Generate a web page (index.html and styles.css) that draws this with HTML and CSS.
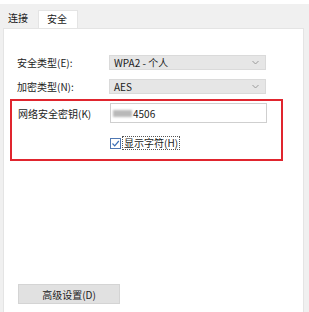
FILE: index.html
```html
<!DOCTYPE html>
<html lang="zh-CN">
<head>
  <meta charset="UTF-8" />
  <title>无线网络属性</title>
  <link rel="stylesheet" href="styles.css">
</head>
<body>
  <div class="top-strip"></div>
  <div class="tabbar">
    <span class="tab">连接</span>
    <span class="tab active">安全</span>
  </div>

  <div class="panel">
    <div class="row">
      <label class="label">安全类型(E):</label>
      <div class="select">
        <span>WPA2 - 个人</span>
        <svg class="arrow" width="7" height="5" viewBox="0 0 7 5"><path d="M0.5 1 L3.5 4 L6.5 1" fill="none" stroke="#9a9a9a" stroke-width="1"/></svg>
      </div>
    </div>
    <div class="row">
      <label class="label">加密类型(N):</label>
      <div class="select">
        <span>AES</span>
        <svg class="arrow" width="7" height="5" viewBox="0 0 7 5"><path d="M0.5 1 L3.5 4 L6.5 1" fill="none" stroke="#9a9a9a" stroke-width="1"/></svg>
      </div>
    </div>

    <div class="highlight">
      <div class="row key-row">
        <label class="label">网络安全密钥(K)</label>
        <div class="input"><span class="mask"></span>4506</div>
      </div>
      <div class="check-row">
        <span class="checkbox">
          <svg width="9" height="9" viewBox="0 0 9 9"><path d="M1.5 4.5 L3.7 6.8 L7.8 2" fill="none" stroke="#3b6fb6" stroke-width="1.2"/></svg>
        </span>
        <span class="check-label">显示字符(H)</span>
      </div>
    </div>

    <div class="spacer"></div>
    <button class="btn">高级设置(D)</button>
  </div>
</body>
</html>
```

FILE: styles.css
```css
* {
  box-sizing: border-box;
  margin: 0;
  padding: 0;
}

body {
  width: 309px;
  height: 312px;
  overflow: hidden;
  background: #f0f0f0;
  font-family: "Noto Sans CJK SC", "Liberation Sans", sans-serif;
  font-size: 10px;
  color: #1a1a1a;
  display: flex;
  flex-direction: column;
}

.top-strip {
  height: 4px;
  background: #fff;
}

.tabbar {
  height: 24px;
  display: flex;
  align-items: flex-end;
  padding-left: 4px;
}

.tab {
  height: 18px;
  line-height: 16px;
  padding: 0 4px;
}

.tab.active {
  background: #fff;
  border: 1px solid #e4e4e4;
  border-bottom: none;
  width: 40px;
  margin-left: 6px;
  padding-left: 8px;
}

.panel {
  flex: 1;
  background: #fff;
  margin: 0 5px 0 3px;
  border: 1px solid #e4e4e4;
  border-bottom: none;
  padding: 26px 0 8px 13px;
  display: flex;
  flex-direction: column;
}

.row {
  display: flex;
  align-items: center;
  height: 15px;
  margin-bottom: 9px;
}

.label {
  width: 92px;
  color: #222;
}

.select {
  width: 157px;
  height: 15px;
  background: #e6e6e6;
  border: 1px solid #dadada;
  display: flex;
  align-items: center;
  justify-content: space-between;
  padding: 0 6px 0 4px;
  font-size: 10px;
}

.highlight {
  margin: -4px 0 0 -7px;
  width: 273px;
  height: 62px;
  border: 2px solid #e0252e;
  padding: 2px 0 0 6px;
}

.key-row {
  height: 20px;
  margin-bottom: 13px;
}

.input {
  width: 157px;
  height: 20px;
  border: 1px solid #cfcfcf;
  display: flex;
  align-items: center;
  padding-left: 2px;
  font-size: 10px;
  margin-left: 0;
}

.mask {
  display: inline-block;
  width: 19px;
  height: 7px;
  background: #b9b9b9;
  filter: blur(1px);
  margin-right: 1px;
}

.check-row {
  display: flex;
  align-items: center;
  padding-left: 92px;
}

.checkbox {
  width: 11px;
  height: 11px;
  border: 1px solid #4f78b3;
  display: flex;
  align-items: center;
  justify-content: center;
  background: #fff;
}

.check-label {
  margin-left: 1px;
  border: 1px dotted #555;
  padding: 0 1px;
  line-height: 12px;
}

.spacer {
  flex: 1;
}

.btn {
  width: 102px;
  height: 20px;
  background: #e1e1e1;
  border: 1px solid #d4d4d4;
  font-family: inherit;
  font-size: 10px;
  color: #222;
  margin-left: 1px;
}
```
